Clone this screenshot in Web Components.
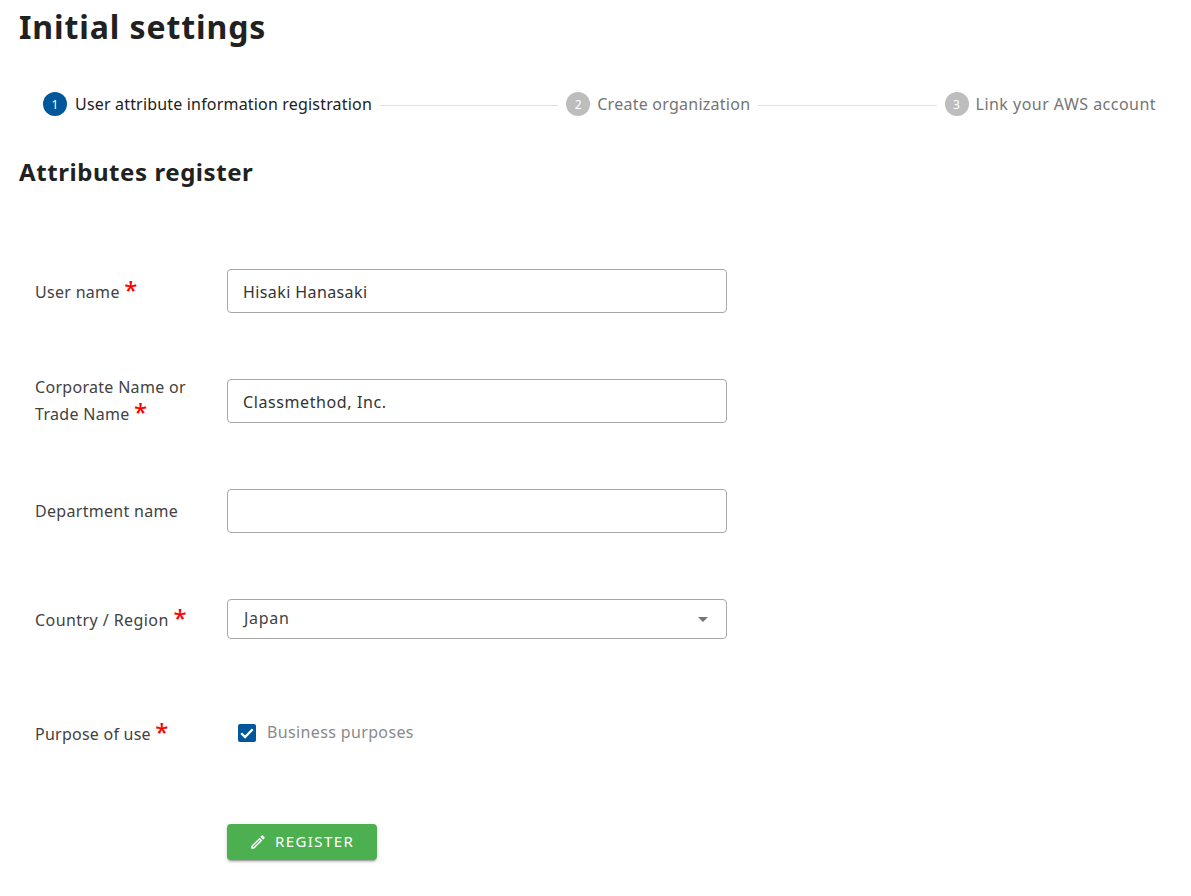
<!DOCTYPE html>
<html><head><meta charset="utf-8">
<style>
html,body{margin:0;padding:0;background:#fff}
body{font-family:"Noto Sans","Open Sans",sans-serif;color:#212121;width:1191px;height:896px;overflow:hidden}
</style></head><body>
<settings-page></settings-page>
<script>
const FONT='"Noto Sans","Open Sans",sans-serif';
function def(name,html){
  customElements.define(name,class extends HTMLElement{
    constructor(){super();this.attachShadow({mode:'open'}).innerHTML=typeof html==='function'?html(this):html;}
  });
}
def('step-item',el=>`<style>
:host{display:flex;align-items:center;flex:none;height:24px}
.c{width:24px;height:24px;border-radius:50%;background:#bdbdbd;color:#fff;font-size:12px;display:flex;align-items:center;justify-content:center;margin-right:var(--gap,8px)}
.t{font-size:16px;color:#757575;letter-spacing:var(--ls,.3px);white-space:nowrap;margin-top:-1px}
:host([active]) .c{background:#01579b}
:host([active]) .t{color:#212121}
</style><span class="c">${el.getAttribute('n')}</span><span class="t"><slot></slot></span>`);
def('step-line',`<style>:host{display:block;flex:1 1 0;height:1px;background:#e0e0e0;margin:2px 8px 0}</style>`);
def('step-bar',`<style>:host{display:flex;align-items:center;padding:0 35px 0 43px;height:24px}</style><slot></slot>`);
def('req-mark',`<style>:host{display:inline-block;color:#f00;font-size:24px;font-weight:500;line-height:16px;height:16px;vertical-align:-1px;margin-left:0;font-family:"Noto Sans",sans-serif;letter-spacing:0}</style>*`);
def('form-row',`<style>
:host{display:flex;align-items:center;height:var(--h,44px);margin-bottom:var(--mb,66px)}
.l{width:192px;flex:none;font-size:16px;line-height:27px;color:#424242;letter-spacing:var(--ls,.3px);box-sizing:border-box;padding-top:var(--lo,0);}
</style><div class="l"><slot name="label"></slot></div><slot></slot>`);
def('text-box',`<style>
:host{display:flex;align-items:center;box-sizing:border-box;width:500px;height:44px;border:1px solid #a8a8a8;border-radius:4px;padding:1px 15px 0;font-size:16px;color:#333;letter-spacing:var(--ls,.4px)}
</style><slot></slot>`);
def('select-box',`<style>
:host{display:flex;align-items:center;justify-content:space-between;box-sizing:border-box;width:500px;height:40px;border:1px solid #a8a8a8;border-radius:4px;padding:0 18px 0 16px;font-size:16px;color:#424242;letter-spacing:.7px}
span{margin-top:-2px}
i{display:block;width:0;height:0;border-left:5px solid transparent;border-right:5px solid transparent;border-top:5px solid #757575;margin-top:1px}
</style><span><slot></slot></span><i></i>`);
def('check-box',`<style>
:host{display:flex;align-items:center;font-size:16px;color:#8a8a8a;letter-spacing:.36px;margin-left:11px}
svg{width:18px;height:18px;margin-right:11px;flex:none}
span{margin-top:-2px}
</style><svg viewBox="0 0 18 18"><rect width="18" height="18" rx="2" fill="#01579b"/><path d="M3.2 9.2l3.9 3.9 7.6-7.9" fill="none" stroke="#fff" stroke-width="2.3"/></svg><span><slot></slot></span>`);
def('green-button',`<style>
:host{display:inline-flex;align-items:center;box-sizing:border-box;width:150px;height:36px;background:#4caf50;border-radius:4px;color:#fff;font-size:15px;letter-spacing:1.4px;padding-left:22px;box-shadow:0 3px 1px -2px rgba(0,0,0,.2),0 2px 2px rgba(0,0,0,.14),0 1px 5px rgba(0,0,0,.12)}
svg{width:18px;height:18px;margin-right:8px;flex:none}
span{margin-top:-2px}
</style><svg viewBox="0 0 24 24"><path fill="#fff" d="M3 17.25V21h3.75L17.81 9.94l-3.75-3.75L3 17.25zM5.92 19H5v-.92l9.06-9.06.92.92L5.92 19zM20.71 7.04a1 1 0 0 0 0-1.41l-2.34-2.34a1 1 0 0 0-1.41 0l-1.83 1.83 3.75 3.75 1.83-1.83z"/></svg><span><slot></slot></span>`);
def('settings-page',`<style>
:host{display:block;font-family:${FONT}}
h1{font-size:32px;font-weight:700;line-height:44px;margin:0 0 0 19px;padding-top:5px;color:#212121;letter-spacing:.9px}
step-bar{margin-top:43px}
h2{font-size:24px;font-weight:700;line-height:32px;margin:40px 0 81px 19px;color:#212121;letter-spacing:.57px}
form{display:block;padding-left:35px}
</style>
<h1>Initial settings</h1>
<step-bar>
<step-item n="1" active style="--ls:.18px">User attribute information registration</step-item><step-line></step-line>
<step-item n="2" style="--ls:.25px;--gap:7px">Create organization</step-item><step-line></step-line>
<step-item n="3" style="--ls:.47px;--gap:7px">Link your AWS account</step-item>
</step-bar>
<h2>Attributes register</h2>
<form>
<form-row style="--lo:2px"><span slot="label">User name <req-mark></req-mark></span><text-box>Hisaki Hanasaki</text-box></form-row>
<form-row><span slot="label">Corporate Name or<br>Trade Name <req-mark></req-mark></span><text-box style="--ls:.6px">Classmethod, Inc.</text-box></form-row>
<form-row><span slot="label">Department name</span><text-box></text-box></form-row>
<form-row style="--h:40px;--mb:74px;--ls:.43px;--lo:2px"><span slot="label">Country / Region <req-mark></req-mark></span><select-box>Japan</select-box></form-row>
<form-row style="--h:40px;--mb:71px;--ls:.24px;--lo:2px"><span slot="label">Purpose of use <req-mark></req-mark></span><check-box>Business purposes</check-box></form-row>
<div style="padding-left:192px"><green-button>REGISTER</green-button></div>
</form>`);
</script>
</body></html>
